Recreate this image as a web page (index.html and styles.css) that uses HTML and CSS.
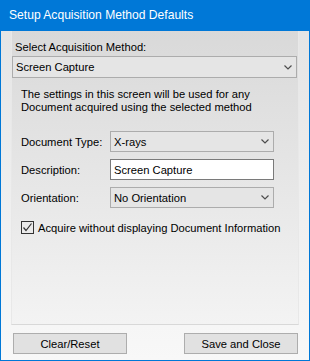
FILE: index.html
```html
<!DOCTYPE html>
<html>
<head>
<meta charset="utf-8">
<link rel="stylesheet" href="styles.css">
</head>
<body>
<div class="window">
  <div class="titlebar">Setup Acquisition Method Defaults</div>
  <div class="client">
    <div class="panel">
      <div class="top-label">Select Acquisition Method:</div>
      <div class="combo wide">
        <span class="value">Screen Capture</span>
        <svg class="chev" width="8" height="5" viewBox="0 0 8 5"><polyline points="0.5,0.5 4,4 7.5,0.5" fill="none" stroke="#4d4d4d" stroke-width="1.2"/></svg>
      </div>
      <p class="note">The settings in this screen will be used for any<br>Document acquired using the selected method</p>
      <div class="fields">
        <div class="row">
          <span class="label">Document Type:</span>
          <div class="combo field">
            <span class="value">X-rays</span>
            <svg class="chev" width="8" height="5" viewBox="0 0 8 5"><polyline points="0.5,0.5 4,4 7.5,0.5" fill="none" stroke="#4d4d4d" stroke-width="1.2"/></svg>
          </div>
        </div>
        <div class="row">
          <span class="label">Description:</span>
          <div class="textbox field">Screen Capture</div>
        </div>
        <div class="row">
          <span class="label">Orientation:</span>
          <div class="combo field">
            <span class="value">No Orientation</span>
            <svg class="chev" width="8" height="5" viewBox="0 0 8 5"><polyline points="0.5,0.5 4,4 7.5,0.5" fill="none" stroke="#4d4d4d" stroke-width="1.2"/></svg>
          </div>
        </div>
      </div>
      <div class="check">
        <span class="box"><svg width="11" height="11" viewBox="0 0 11 11"><polyline points="1.5,5.5 4,8.5 9.5,1.5" fill="none" stroke="#333" stroke-width="1.2"/></svg></span>
        <span>Acquire without displaying Document Information</span>
      </div>
    </div>
    <div class="buttons">
      <div class="btn">Clear/Reset</div>
      <div class="btn">Save and Close</div>
    </div>
  </div>
</div>
</body>
</html>
```

FILE: styles.css
```css
* { box-sizing: border-box; }
html, body { margin: 0; padding: 0; }
body {
  font-family: "Liberation Sans", Arial, sans-serif;
  font-size: 11.2px;
  color: #000;
  background: #fff;
}
.window {
  width: 310px;
  height: 361px;
  border: 1px solid #0078d7;
  display: flex;
  flex-direction: column;
  background: linear-gradient(#e3e3e3, #f8f8f8);
}
.titlebar {
  height: 30px;
  flex: none;
  background: #0078d7;
  color: #fff;
  font-size: 12.1px;
  line-height: 29px;
  padding-left: 8px;
}
.client {
  flex: 1;
  display: flex;
  flex-direction: column;
  padding-bottom: 6px;
}
.panel {
  flex: 1;
  margin: 0 10px;
  border: 1px solid #e8e8e8;
  border-top: none;
  border-bottom-color: #d8d8d8;
  background: linear-gradient(#d9d9d9, #f3f3f3);
  padding-top: 9px;
  display: flex;
  flex-direction: column;
}
.top-label {
  height: 15px;
  line-height: 15px;
  padding-left: 3px;
  margin-bottom: 1px;
}
.combo {
  display: flex;
  align-items: center;
  justify-content: space-between;
  background: #e5e5e5;
  border: 1px solid #acacac;
  padding: 0 4px 0 3px;
}
.combo.wide {
  height: 22px;
  margin-right: 1px;
}
.chev { display: block; }
.note {
  margin: 10px 0 0 0;
  padding-left: 9px;
  line-height: 13px;
}
.fields {
  margin-top: 17px;
  padding-left: 9px;
  display: flex;
  flex-direction: column;
  gap: 7px;
}
.row {
  display: flex;
  align-items: center;
  height: 21px;
}
.label { width: 89px; }
.field {
  width: 164px;
  height: 21px;
}
.textbox {
  background: #fff;
  border: 1px solid #7a7a7a;
  display: flex;
  align-items: center;
  padding-left: 3px;
}
.check {
  margin-top: 13px;
  padding-left: 9px;
  display: flex;
  align-items: center;
  gap: 4px;
  height: 13px;
}
.box {
  width: 13px;
  height: 13px;
  border: 1px solid #333;
  display: flex;
  align-items: center;
  justify-content: center;
}
.box svg { display: block; }
.buttons {
  margin-top: 8px;
  padding: 0 11px 0 12px;
  display: flex;
  justify-content: space-between;
}
.btn {
  width: 114px;
  height: 21px;
  background: #e1e1e1;
  border: 1px solid #adadad;
  display: flex;
  align-items: center;
  justify-content: center;
}
```
